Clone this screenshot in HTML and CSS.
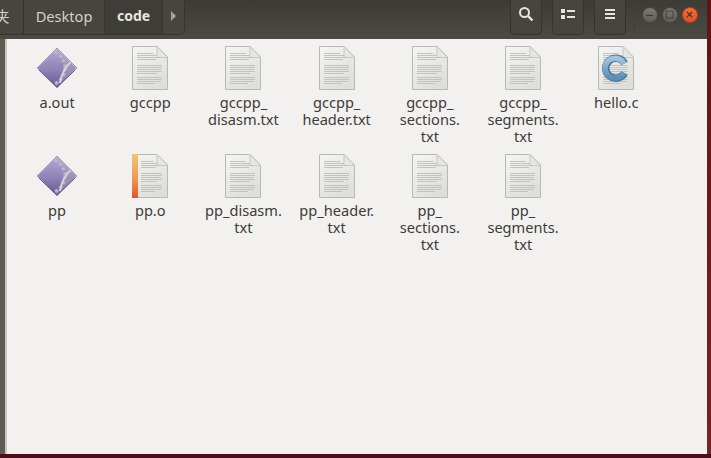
FILE: index.html
```html
<!DOCTYPE html>
<html>

<head>
    <title>code</title>
    <meta name="viewport" content="width=device-width, initial-scale=1.0">
    <link rel="stylesheet" href="styles.css">
</head>

<body>
    <svg class="defs" width="0" height="0">
        <defs>
            <linearGradient id="paper" x1="0" y1="0" x2="0.6" y2="1">
                <stop offset="0" stop-color="#f5f5f3"/>
                <stop offset="1" stop-color="#dededc"/>
            </linearGradient>
            <linearGradient id="stripe" x1="0" y1="0" x2="0" y2="1">
                <stop offset="0" stop-color="#f3c27a"/>
                <stop offset="0.55" stop-color="#ef9a50"/>
                <stop offset="1" stop-color="#e4532a"/>
            </linearGradient>
            <linearGradient id="gem" x1="0" y1="0" x2="0" y2="1">
                <stop offset="0" stop-color="#aea4cf"/>
                <stop offset="0.55" stop-color="#8f82b6"/>
                <stop offset="1" stop-color="#6d5e94"/>
            </linearGradient>
            <linearGradient id="gem-side" x1="0" y1="0" x2="0" y2="1">
                <stop offset="0" stop-color="#b5afc8"/>
                <stop offset="1" stop-color="#85799f"/>
            </linearGradient>
            <linearGradient id="cee" x1="0" y1="0" x2="0" y2="1">
                <stop offset="0" stop-color="#a4c4da"/>
                <stop offset="1" stop-color="#5a8eb2"/>
            </linearGradient>
            <clipPath id="gem-clip">
                <path d="M21 2L40 21L21 40L2 21Z"/>
            </clipPath>

            <g id="fold">
                <path d="M26 1.5V11C26 12 27 12.5 28 12.5H36.5Z" fill="#e6e6e4" stroke="#c8c8c4"/>
            </g>
            <g id="lines" stroke="#bdbdbb" stroke-width="0.9">
                <path d="M6 8.5H22M6 10.5H26M6 12.5H29M6 14.5H25"/>
                <path d="M6 20.5H31M6 22.5H31M6 24.5H30M6 26.5H31M6 28.5H26"/>
                <path d="M6 32.5H31M6 34.5H31M6 36.5H30M6 38.5H24"/>
            </g>

            <symbol id="sheet" viewBox="0 0 38 46">
                <path d="M1.5 1.5H26L36.5 12V44.5H1.5Z" fill="url(#paper)" stroke="#b8b8b4"/>
                <use href="#fold"/>
                <use href="#lines"/>
            </symbol>

            <symbol id="program" viewBox="0 0 42 42">
                <path d="M21 1L41 21L21 41L1 21Z" fill="#c4bde0" stroke="#a79cc8" stroke-linejoin="round"/>
                <g clip-path="url(#gem-clip)">
                    <rect width="42" height="42" fill="url(#gem-side)"/>
                    <circle cx="12" cy="21" r="17" fill="url(#gem)"/>
                    <circle cx="12" cy="21" r="17" fill="none" stroke="#bdb7d2" stroke-width="3" stroke-dasharray="3 2.4"/>
                    <path d="M36 14C31 18 26 24 24 36" fill="none" stroke="#d4d0e2" stroke-width="2.2"/>
                </g>
                <path d="M3 23L21 40L39 23" fill="none" stroke="#5a4a84" stroke-width="1"/>
            </symbol>

            <symbol id="object" viewBox="0 0 38 46">
                <path d="M1.5 1.5H26L36.5 12V44.5H1.5Z" fill="url(#paper)" stroke="#b8b8b4"/>
                <rect x="1" y="1" width="6" height="44" fill="url(#stripe)"/>
                <use href="#fold"/>
                <g stroke="#bdbdbb" stroke-width="0.9">
                    <path d="M10 8.5H22M10 10.5H26M10 12.5H29M10 14.5H25"/>
                    <path d="M10 20.5H31M10 22.5H31M10 24.5H30M10 26.5H31M10 28.5H26"/>
                    <path d="M10 32.5H31M10 34.5H31M10 36.5H30M10 38.5H24"/>
                </g>
            </symbol>

            <symbol id="csource" viewBox="0 0 38 46">
                <path d="M1.5 1.5H26L36.5 12V44.5H1.5Z" fill="url(#paper)" stroke="#b8b8b4"/>
                <use href="#fold"/>
                <use href="#lines"/>
                <path d="M27.5 18.5A10 10 0 1 0 27.5 28" fill="none" stroke="#437599" stroke-width="7.5"/>
                <path d="M27 18.8A10 10 0 1 0 27 27.7" fill="none" stroke="url(#cee)" stroke-width="5.5"/>
            </symbol>
        </defs>
    </svg>

    <div class="desktop">
        <div class="edge"></div>
        <div class="window">
            <div class="toolbar">
                <div class="path">
                    <div class="crumb crumb-cut"><span>夹</span></div>
                    <div class="crumb">Desktop</div>
                    <div class="crumb crumb-active">code</div>
                    <div class="crumb crumb-more"><span class="arrow"></span></div>
                </div>
                <div class="tools">
                    <div class="tool">
                        <svg width="16" height="16" viewBox="0 0 16 16">
                            <circle cx="6.5" cy="6.5" r="4.5" fill="none" stroke="#e6e5df" stroke-width="2"/>
                            <path d="M10 10L14.5 14.5" stroke="#e6e5df" stroke-width="2.4"/>
                        </svg>
                    </div>
                    <div class="tool">
                        <svg width="14" height="12" viewBox="0 0 14 12" fill="#e6e5df">
                            <rect x="0" y="1" width="4" height="4"/>
                            <rect x="0" y="7" width="4" height="4"/>
                            <rect x="6" y="2" width="8" height="2"/>
                            <rect x="6" y="8" width="8" height="2"/>
                        </svg>
                    </div>
                    <div class="tool">
                        <svg width="12" height="12" viewBox="0 0 12 12" fill="#e6e5df">
                            <rect x="1" y="1" width="10" height="2"/>
                            <rect x="1" y="5" width="10" height="2"/>
                            <rect x="1" y="9" width="10" height="2"/>
                        </svg>
                    </div>
                </div>
                <div class="controls">
                    <div class="control">
                        <svg width="16" height="16" viewBox="0 0 16 16"><path d="M3.5 8.5H11.5" stroke="#3b3a35" stroke-width="1.2"/></svg>
                    </div>
                    <div class="control">
                        <svg width="16" height="16" viewBox="0 0 16 16"><rect x="3.5" y="3.5" width="8" height="8" fill="none" stroke="#3b3a35"/></svg>
                    </div>
                    <div class="control control-close">
                        <svg width="16" height="16" viewBox="0 0 16 16"><path d="M4.5 4.5L10.5 10.5M10.5 4.5L4.5 10.5" stroke="#3b2a20" stroke-width="1.3"/></svg>
                    </div>
                </div>
            </div>

            <div class="files">
                <div class="file"><svg class="icon-gem"><use href="#program"/></svg><p>a.out</p></div>
                <div class="file"><svg class="icon-doc"><use href="#sheet"/></svg><p>gccpp</p></div>
                <div class="file"><svg class="icon-doc"><use href="#sheet"/></svg><p>gccpp_<br>disasm.txt</p></div>
                <div class="file"><svg class="icon-doc"><use href="#sheet"/></svg><p>gccpp_<br>header.txt</p></div>
                <div class="file"><svg class="icon-doc"><use href="#sheet"/></svg><p>gccpp_<br>sections.<br>txt</p></div>
                <div class="file"><svg class="icon-doc"><use href="#sheet"/></svg><p>gccpp_<br>segments.<br>txt</p></div>
                <div class="file"><svg class="icon-doc"><use href="#csource"/></svg><p>hello.c</p></div>
                <div class="file"><svg class="icon-gem"><use href="#program"/></svg><p>pp</p></div>
                <div class="file"><svg class="icon-doc"><use href="#object"/></svg><p>pp.o</p></div>
                <div class="file"><svg class="icon-doc"><use href="#sheet"/></svg><p>pp_disasm.<br>txt</p></div>
                <div class="file"><svg class="icon-doc"><use href="#sheet"/></svg><p>pp_header.<br>txt</p></div>
                <div class="file"><svg class="icon-doc"><use href="#sheet"/></svg><p>pp_<br>sections.<br>txt</p></div>
                <div class="file"><svg class="icon-doc"><use href="#sheet"/></svg><p>pp_<br>segments.<br>txt</p></div>
            </div>
        </div>
        <div class="right-edge"></div>
    </div>
</body>

</html>
```

FILE: styles.css
```css
* {
    margin: 0;
    padding: 0;
    box-sizing: border-box;
}

html,
body {
    width: 711px;
    height: 458px;
    overflow: hidden;
}

body {
    font-family: "Noto Sans", "Noto Sans CJK SC", sans-serif;
    font-size: 14.6px;
}

.defs {
    display: block;
    height: 0;
}

.desktop {
    display: flex;
    height: 454px;
    box-shadow: 0 4px 0 #4a0f1c;
    background: #6e1a1d;
}

.edge {
    width: 5px;
    background-color: #5d5b50;
}

.right-edge {
    width: 4px;
    background: linear-gradient(#5f1612, #7a2224);
}

.window {
    flex: 1;
    display: flex;
    flex-direction: column;
    background-color: #f2f1ef;
    border-left: 2px solid #c9c8c4;
}

.toolbar {
    height: 39px;
    margin-left: -7px;
    display: flex;
    align-items: flex-start;
    background: linear-gradient(#3c3b36, #4c4a43);
    color: #dfdbd2;
}

.path {
    display: flex;
    height: 35px;
    width: 185px;
    background-color: #47453e;
    border: 1px solid #35342f;
    border-top: none;
    border-left: none;
    border-radius: 0 0 5px 0;
}

.crumb {
    display: flex;
    align-items: center;
    justify-content: center;
    width: 81px;
    padding-bottom: 3px;
    border-right: 1px solid #35342f;
    color: #d3d0c5;
}

.crumb-cut {
    width: 24px;
    justify-content: flex-start;
    overflow: hidden;
}

.crumb-cut span {
    margin-left: -5px;
}

.crumb-active {
    width: 58px;
    font-size: 14px;
    font-weight: 700;
    color: #e8e6df;
    background-color: #3f3d37;
}

.crumb-more {
    width: 21px;
    border-right: none;
}

.arrow {
    width: 0;
    height: 0;
    border-left: 5px solid #a5a298;
    border-top: 5px solid transparent;
    border-bottom: 5px solid transparent;
}

.tools {
    display: flex;
    gap: 10px;
    margin-left: 325px;
}

.tool {
    display: flex;
    align-items: center;
    justify-content: center;
    width: 32px;
    height: 35px;
    padding-bottom: 6px;
    background-color: #46443d;
    border: 1px solid #35342f;
    border-top: none;
    border-radius: 0 0 5px 5px;
}

.controls {
    display: flex;
    gap: 4px;
    height: 35px;
    margin-left: 8px;
    padding: 7px 0 0 7px;
    border-left: 1px solid #413f39;
}

.control {
    display: flex;
    align-items: center;
    justify-content: center;
    width: 16px;
    height: 16px;
    border-radius: 50%;
    background: linear-gradient(#7a7972, #5f5e57);
    border: 1px solid #4a4943;
}

.control-close {
    background: linear-gradient(#f0703c, #df4f1e);
    border-color: #b5451f;
}

.files {
    display: grid;
    grid-template-columns: repeat(7, 93.2px);
    row-gap: 8px;
    padding: 6px 0 0 3.5px;
    align-content: start;
}

.file {
    display: flex;
    flex-direction: column;
    align-items: center;
    height: 100px;
}

.file svg {
    display: block;
}

.icon-gem,
.icon-doc {
    height: 46px;
}

.icon-gem {
    width: 42px;
}

.icon-doc {
    width: 38px;
}

.file p {
    margin-top: 3px;
    line-height: 17px;
    text-align: center;
    color: #3d3c38;
    white-space: nowrap;
}
```
